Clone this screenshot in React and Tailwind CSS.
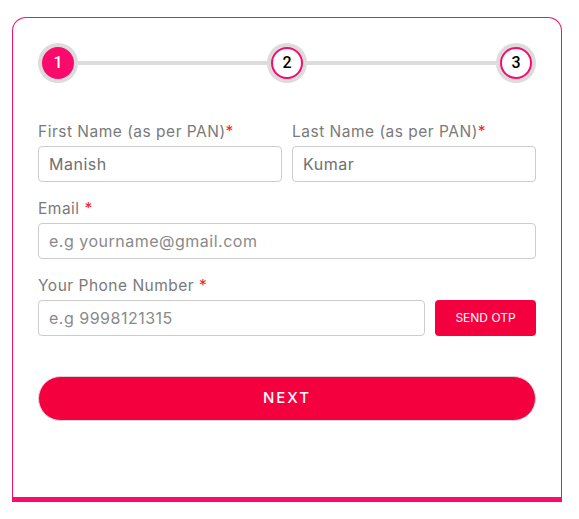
import React from 'react';

const pink = 'bg-[#fa0a6a]';

const Step = ({ n, active }) => (
  <div className="w-10 h-10 rounded-full bg-[#dcdcdc] p-[4px] shrink-0">
    <div
      className={`w-full h-full rounded-full flex items-center justify-center text-[16px] font-medium ${
        active ? `${pink} text-white` : 'bg-white border-2 border-[#fa0a6a] text-black'
      }`}
      style={{ fontFamily: 'Roboto, sans-serif' }}
    >
      {n}
    </div>
  </div>
);

const Label = ({ children, gap }) => (
  <label className="block text-[15.5px] leading-[22px] tracking-[0.5px] text-[#7a7a7a] mb-[3px]">
    {children}
    <span className="text-[#ff1a1a]">{gap ? ' *' : '*'}</span>
  </label>
);

const inputCls =
  'w-full h-9 border border-[#cccccc] rounded-[4px] px-[10px] text-[16px] tracking-[0.5px] text-[#6f6f6f] placeholder:text-[#8a8a8a] outline-none bg-white';

export default function App() {
  return (
    <div className="w-[579px] h-[519px] bg-white" style={{ fontFamily: 'Inter, sans-serif' }}>
      <div className="pt-[17px] pl-[12px]">
        <div className="w-[550px] h-[485px] border border-[#f0136e] border-b-[5px] border-b-[#ff0a6a] rounded-tl-[14px] rounded-tr-[14px] px-[25px] pt-[25px]">
          {/* stepper */}
          <div className="flex items-center">
            <Step n="1" active />
            <div className="flex-1 h-[4px] bg-[#dcdcdc]" />
            <Step n="2" />
            <div className="flex-1 h-[4px] bg-[#dcdcdc]" />
            <Step n="3" />
          </div>

          <div className="mt-[38px] flex gap-[10px]">
            <div className="flex-1">
              <Label>First Name (as per PAN)</Label>
              <input className={inputCls} defaultValue="Manish" />
            </div>
            <div className="flex-1">
              <Label>Last Name (as per PAN)</Label>
              <input className={inputCls} defaultValue="Kumar" />
            </div>
          </div>

          <div className="mt-4">
            <Label gap>Email</Label>
            <input className={inputCls} placeholder="e.g yourname@gmail.com" />
          </div>

          <div className="mt-4">
            <Label gap>Your Phone Number</Label>
            <div className="flex gap-[10px]">
              <input className={`${inputCls} flex-1`} placeholder="e.g 9998121315" />
              <button className="w-[101px] h-9 shrink-0 rounded-[4px] bg-[#f5003f] text-white text-[12px] uppercase">
                Send OTP
              </button>
            </div>
          </div>

          <button className="mt-10 w-full h-[45px] rounded-full bg-[#f5003f] text-white text-[15px] font-medium tracking-[2px] border border-[#d8d8d8]">
            NEXT
          </button>
        </div>
      </div>
    </div>
  );
}
